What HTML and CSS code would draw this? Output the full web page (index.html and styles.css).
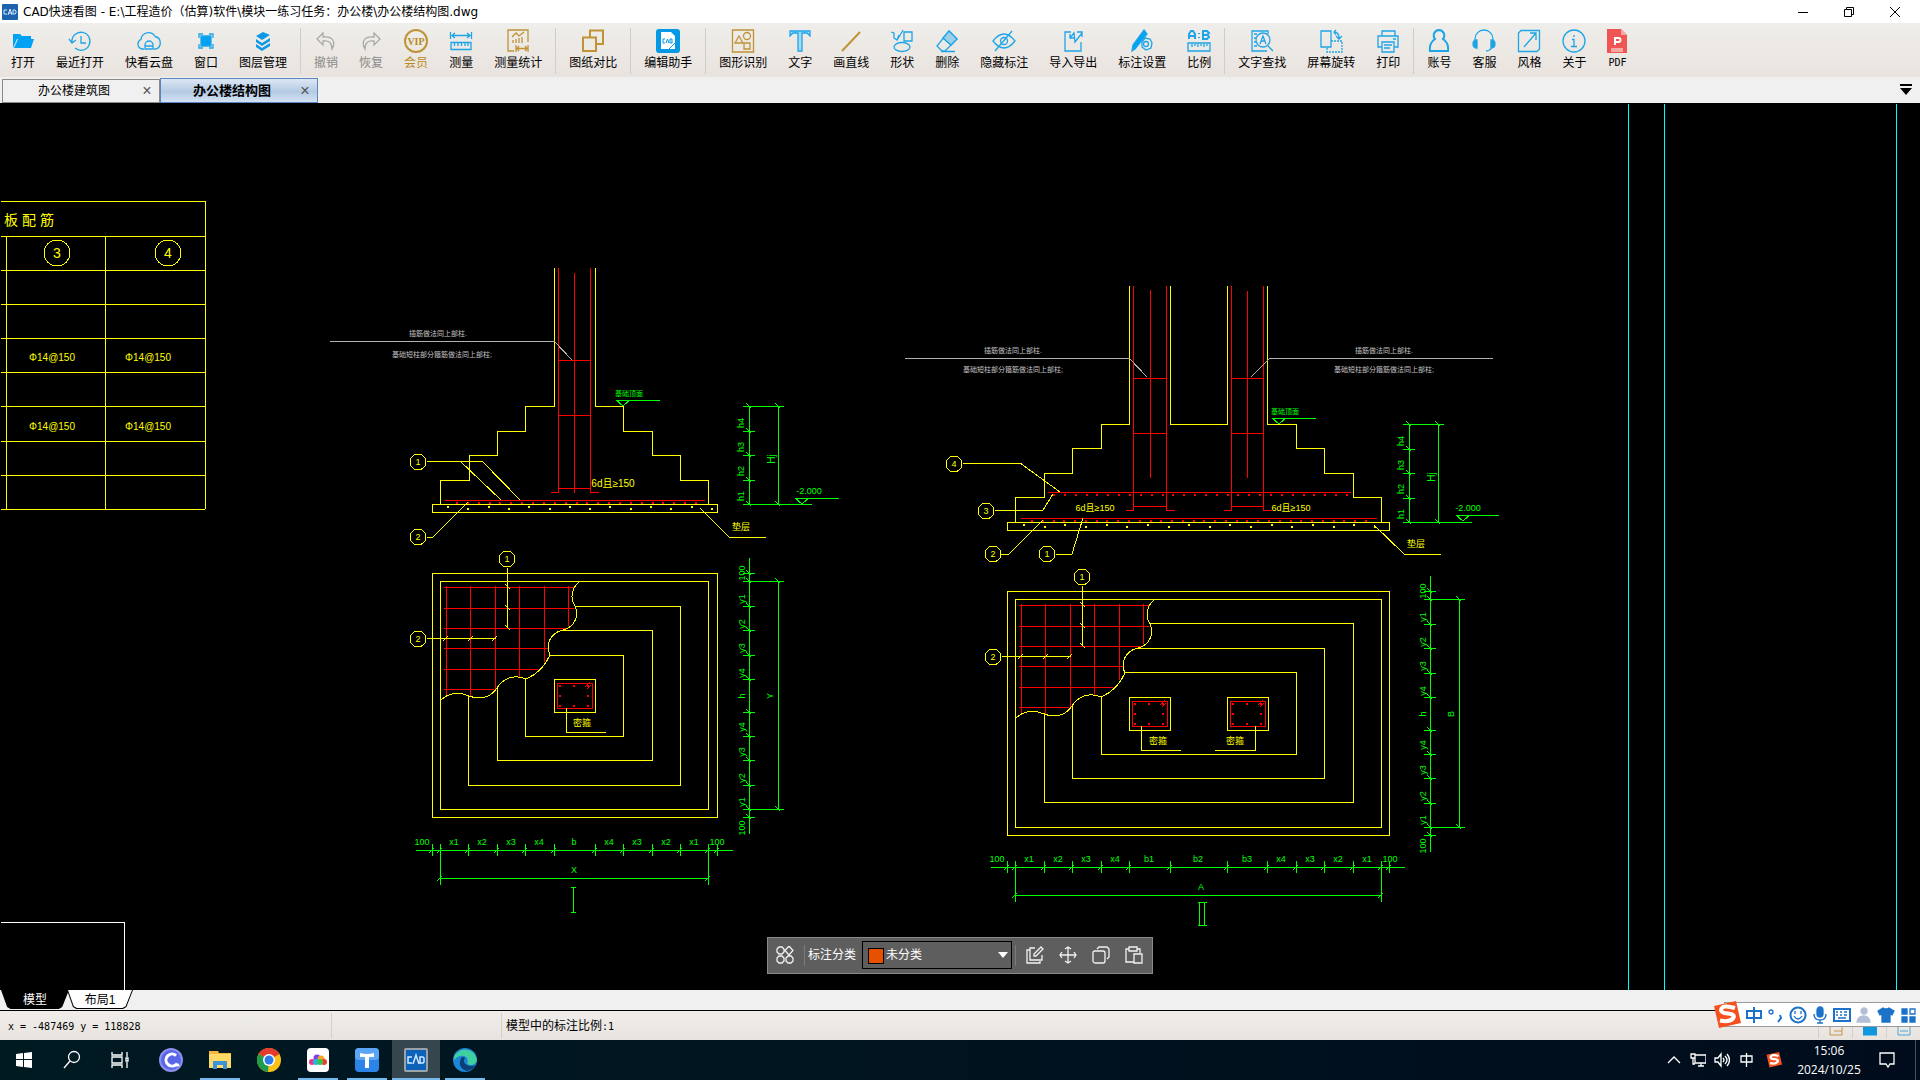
FILE: index.html
```
<!DOCTYPE html>
<html lang="zh-CN">
<head>
  <meta charset="UTF-8" />
  <meta name="viewport" content="width=device-width, initial-scale=1.0" />
  <title>CAD快速看图</title>
  <link rel="stylesheet" href="styles.css">
</head>
<body>
  <header class="titlebar">
    <svg class="app-icon" viewBox="0 0 16 16"><rect width="16" height="16" rx="1" fill="#1b63ad"/><path d="M5 6H2v4h3M6 11l2-6 2 6M6.500 9h3M11 6v4h2l1-1V7l-1-1z" fill="none" stroke="#d6ecff"/></svg>
    <h1>CAD快速看图 - E:\工程造价（估算)软件\模块一练习任务：办公楼\办公楼结构图.dwg</h1>
    <div class="win-buttons">
      <button aria-label="最小化"><svg viewBox="0 0 12 12"><path d="M1 6.500h10"/></svg></button>
      <button aria-label="还原"><svg viewBox="0 0 12 12"><path d="M1.500 3.500h7v7h-7zM3.500 3.500v-2h7v7h-2"/></svg></button>
      <button aria-label="关闭"><svg viewBox="0 0 12 12"><path d="M1 1l10 10M11 1L1 11"/></svg></button>
    </div>
  </header>

  <nav class="toolbar">
    <button><svg viewBox="0 0 24 24"><path d="M2 19V5h7l2 2h9v3H6z" fill="#00a2f3"/><path d="M3 19L7 10h16l-3 9z" fill="#00a2f3"/></svg>打开</button>
    <button><svg viewBox="0 0 24 24" class="ic"><path d="M4 13a9 9 0 1 1 3 6M1 10l3 4 4-3M13 7v7h5"/></svg>最近打开</button>
    <button><svg viewBox="0 0 24 24" class="ic"><path d="M7 20H5A5 5 0 0 1 4 10.500 7.500 7.500 0 0 1 18 7.500 6.500 6.500 0 0 1 19 20h-2M8 20v-4a4 4 0 0 1 8 0v4zM8 17h8"/></svg>快看云盘</button>
    <button><svg viewBox="0 0 24 24" class="ic"><path d="M5 9V5h4M15 5h4v4M19 15v4h-4M9 19H5v-4"/><path d="M7 7h10v10H7z" fill="#00a2f3"/></svg>窗口</button>
    <button><svg viewBox="0 0 24 24"><path d="M5 7l7-4 7 3-8 5zM5 10l6 4 8-5v3l-8 5-6-4zM5 15l6 4 8-5v3l-8 5-6-4z" fill="#0c98e6"/></svg>图层管理</button>
    <span class="sep"></span>
    <button class="off"><svg viewBox="0 0 24 24" class="ic gray"><path d="M9 4L3 10l6 6v-4c6-1 9 2 9 8 4-7 1-13-9-12z"/></svg>撤销</button>
    <button class="off"><svg viewBox="0 0 24 24" class="ic gray"><path d="M15 4l6 6-6 6v-4c-6-1-9 2-9 8-4-7-1-13 9-12z"/></svg>恢复</button>
    <button class="vip"><svg viewBox="0 0 24 24" class="ic gold"><circle cx="12" cy="12" r="11" stroke-width="2"/><text x="12" y="16" class="vip-text">VIP</text></svg>会员</button>
    <button><svg viewBox="0 0 24 24" class="ic"><path d="M1.500 3v7M22.500 3v7M3 6.500h18M6 4L3 6.500 6 9M18 4l3 2.500L18 9M2 13.500h20v7H2zM5.500 14v3M9 14v3M12.500 14v3M16 14v3M19 14v3"/></svg>测量</button>
    <button><svg viewBox="0 0 24 24" class="ic gold"><path d="M8 22H2V1h20v12M6 8l4-4 3 3 5-4M7 14v-3M10 14v-4M13 14v-5M16 14v-6M10 16v7M22 16v7M11 19.500h10M13 17l-2 2.500 2 2.500M19 17l2 2.500-2 2.500"/></svg>测量统计</button>
    <span class="sep"></span>
    <button><svg viewBox="0 0 24 24" class="ic gold"><path d="M9 9V1.500h13V15h-7M2 8.500h13V22H2z" stroke-width="2"/></svg>图纸对比</button>
    <span class="sep"></span>
    <button><svg viewBox="0 0 24 24"><rect width="24" height="24" rx="3" fill="#0598e4"/><path d="M5 3h10l4 4v13H5z" fill="#fff"/><path d="M9 10H7v4h2M10 14l1.500-4 1.500 4M14 10v4h2v-4zM13 20l8-8" fill="none" stroke="#0598e4"/></svg>编辑助手</button>
    <span class="sep"></span>
    <button><svg viewBox="0 0 24 24" class="ic gold"><path d="M1.500 1h21v22h-21zM8 7l4 7H4z"/><circle cx="16" cy="7" r="3.500"/><path d="M13 14h6v6h-6z"/></svg>图形识别</button>
    <button><svg viewBox="0 0 24 24" class="ic"><path d="M2 2h20v5l-3-3h-5v18h-4V4H5L2 7z" fill="#a5daf5"/></svg>文字</button>
    <button><svg viewBox="0 0 24 24" class="ic gold"><path d="M3 22L21 3" stroke-width="2"/></svg>画直线</button>
    <button><svg viewBox="0 0 24 24" class="ic"><path d="M1 3l3 1v5l3 2 5-8 1-2M7 11l2-5M14 3h8v9h-8z"/><ellipse cx="12" cy="18" rx="8" ry="4.500"/></svg>形状</button>
    <button><svg viewBox="0 0 24 24" class="ic"><path d="M14 2l8 8-12 12H7l-5-5zM8 9l8 7M6 22.500h14"/><path d="M14 2l8 8-6 6-8-7z" fill="#9dcfe9"/></svg>删除</button>
    <button><svg viewBox="0 0 24 24" class="ic"><path d="M1 12q11-14 22 0-11 14-22 0zM3 22L20 2"/><circle cx="12" cy="12" r="3.500"/></svg>隐藏标注</button>
    <button><svg viewBox="0 0 24 24" class="ic"><path d="M10 3H4v19h16V13M9 9l4-5 1 9 7-9M16 3h5v5M9 5v4h4"/></svg>导入导出</button>
    <button><svg viewBox="0 0 24 24" class="ic"><path d="M14 1l3 4L5 20l-3 2 1-6z" fill="#00a2f3"/><path d="M15 9l5 1 2 4-1 5-5 2-4-3v-5z" fill="#ece9e6"/><circle cx="16" cy="15" r="2.500"/></svg>标注设置</button>
    <button><svg viewBox="0 0 24 24" class="ic"><path d="M2 10V5l2-3h2l2 3v5M2 7h6M12 4v1M12 8v1M16 2h4l2 2-2 2h-4zM16 6h5l1 2-2 2h-4zM16 2v8" stroke-width="2"/><path d="M1 14h22v8H1zM5 15v3M8 15v2M11 15v3M14 15v2M17 15v3M20 15v2"/></svg>比例</button>
    <span class="sep"></span>
    <button><svg viewBox="0 0 24 24" class="ic"><path d="M17 22H2V2h16v3M4 5h3M4 9h2M4 13h2M4 17h3M18 17l5 5"/><circle cx="13" cy="11" r="7"/><path d="M10 15l3-8 3 8M11 12h4"/></svg>文字查找</button>
    <button><svg viewBox="0 0 24 24" class="ic"><path d="M2 2h10v16H2zM15 3q5 0 5 6M17 7l3 3 3-3M17 1l-2 2 2 3"/><path d="M12 12h11v11H8v-4" stroke-dasharray="2 1"/></svg>屏幕旋转</button>
    <button><svg viewBox="0 0 24 24" class="ic"><path d="M6 7V2h13v5M6 18H2V7h20v11h-4M6 13h12v10H6zM8 16h8M8 19h6M17 10h3"/></svg>打印</button>
    <span class="sep"></span>
    <button><svg viewBox="0 0 24 24" class="ic"><path d="M12 1a5.500 5.500 0 0 1 4 9q6 4 5 12H3q-1-8 5-12a5.500 5.500 0 0 1 4-9z" stroke-width="2"/></svg>账号</button>
    <button><svg viewBox="0 0 24 24" class="ic"><path d="M3 13V10a9 9 0 0 1 18 0v3M20 18q-2 4-6 4"/><path d="M5 11v8q-4 0-4-4t4-4zM19 11v8q4 0 4-4t-4-4z" fill="#2a9fdc"/></svg>客服</button>
    <button><svg viewBox="0 0 24 24" class="ic"><path d="M1.500 4L4 1.500h18.500V20L20 22.500H1.500zM7 18L19 4M13 4h6v7"/></svg>风格</button>
    <button><svg viewBox="0 0 24 24" class="ic"><circle cx="12" cy="12" r="11"/><path d="M12 6v2M10 10.500h2V17M9 17.500h6"/></svg>关于</button>
    <button class="narrow"><svg viewBox="0 0 24 24"><path d="M2 0h14l6 6v18H2z" fill="#ee5553"/><path d="M16 0l6 6h-6zM6 19h12v4H6z" fill="#f7a9a5"/><path d="M10 16V9h3.500a2 2 0 0 1 0 4H10" fill="none" stroke="#fff" stroke-width="2"/></svg><span class="latin">PDF</span></button>
  </nav>

  <div class="doc-tabs">
    <div class="doc-tab"><span>办公楼建筑图</span><button aria-label="关闭">×</button></div>
    <div class="doc-tab active"><span>办公楼结构图</span><button aria-label="关闭">×</button></div>
    <button class="tab-menu" aria-label="标签列表"><svg viewBox="0 0 12 12"><path d="M0 0h12v2H0zM0 4h12l-6 7z"/></svg></button>
  </div>

  <main class="canvas">
    <svg id="drawing" class="drawing" viewBox="0 103 1920 887" preserveAspectRatio="xMinYMin meet"></svg>

    <div class="float-bar">
      <button aria-label="分类"><svg viewBox="0 0 18 18"><path d="M3 1h3l2 2v3L6 8H3L1 6V3zM13 0l4 4.500L13 9 9 4.500zM3 10h3l2 2v3l-2 2H3l-2-2v-3zM12 10h3l2 2v3l-2 2h-3l-2-2v-3z"/></svg></button>
      <span class="bar-sep"></span>
      <label for="category">标注分类</label>
      <div class="select-wrap">
        <select id="category"><option>未分类</option></select>
      </div>
      <span class="bar-sep"></span>
      <button aria-label="编辑"><svg viewBox="0 0 18 18"><path d="M9 2H4v12h12V9M4 4H1v13h13v-2M8 10V8l7-7 2 2-7 7z"/></svg></button>
      <button aria-label="移动"><svg viewBox="0 0 18 18"><path d="M9 1v16M1 9h16M6 3l3-2 3 2M6 15l3 2 3-2M3 6L1 9l2 3M15 6l2 3-2 3"/></svg></button>
      <button aria-label="复制"><svg viewBox="0 0 18 18"><rect x="1" y="5" width="12" height="12" rx="2"/><path d="M5 3l2-2h8l2 2v8l-2 2"/></svg></button>
      <button aria-label="粘贴"><svg viewBox="0 0 18 18"><path d="M9 16H1V3h3M12 3h3v4M4 1h8v4H4zM9 8h8v9H9z"/></svg></button>
    </div>
  </main>

  <div class="layout-tabs">
    <button class="layout-tab active">模型</button>
    <button class="layout-tab">布局1</button>
  </div>

  <footer class="status">
    <span class="coords latin">x = -487469 y = 118828</span>
    <span class="blank"></span>
    <span class="scale">模型中的标注比例<span class="latin">:1</span></span>
    <div class="status-icons">
      <i><svg viewBox="0 0 14 14"><path d="M1 1h12v12H1zM5 9h8" stroke="#c29a4b"/></svg></i>
      <i><svg viewBox="0 0 14 14"><path d="M0 0h14v13H0z" fill="#0e97dc" stroke="#0e97dc"/></svg></i>
      <i><svg viewBox="0 0 14 14"><path d="M1 1h12v12H1zM3 9h8" stroke="#4aa7d4"/></svg></i>
    </div>
  </footer>

  <div class="ime">
    <svg class="sogou" viewBox="0 0 28 28"><path d="M1 5L23 0l5 22-22 5z" fill="#f4511e"/><path d="M22 7q-13-4-14 2 0 3 7 3.500 8 1 5 5-4 4-13 2" fill="none" stroke="#fff" stroke-width="4"/></svg>
    <svg viewBox="0 0 18 18"><path d="M2 5h14v7H2zM9 1v16" class="thick"/></svg>
    <svg viewBox="0 0 18 18"><circle cx="4" cy="6" r="2"/><path d="M13 9l1 3-3 4" class="thick"/></svg>
    <svg viewBox="0 0 18 18"><circle cx="9" cy="9" r="7.500" class="thick"/><path d="M5 10q4 6 8 0M6 5v3M12 5v3"/></svg>
    <svg viewBox="0 0 18 18"><rect x="6" y="1" width="6" height="10" rx="3" class="fill"/><path d="M3 8q0 6 6 6t6-6M9 14v3M6 17h6"/></svg>
    <svg viewBox="0 0 18 18"><path d="M1 3h16v12H1z" class="thick"/><path d="M3 6h2M7 6h2M11 6h3M3 9h2M7 9h2M11 9h3M5 12h8"/></svg>
    <svg viewBox="0 0 18 18" class="pale"><circle cx="9" cy="5" r="3" class="fill"/><path d="M2 16q1-6 7-6 5 0 6 6z" class="fill"/></svg>
    <svg viewBox="0 0 18 18"><path d="M1 5l5-3q3 2 6 0l5 3-2 4-2-1v8H5V8L3 9z" class="fill"/></svg>
    <svg viewBox="0 0 18 18"><path d="M3 3h5v5H3zM3 11h5v5H3zM11 11h5v5h-5z" class="fill"/><path d="M11 3h5v5h-5z"/></svg>
  </div>

  <div class="taskbar">
    <button aria-label="开始"><svg viewBox="0 0 24 24"><path d="M4 6l7-1v6H4zM12 5l8-1v7h-8zM4 12h7v7l-7-1zM12 12h8v8l-8-1z" fill="#fff"/></svg></button>
    <button aria-label="搜索"><svg viewBox="0 0 24 24" class="line"><circle cx="14" cy="9" r="5.500"/><path d="M10 13l-6 7"/></svg></button>
    <button aria-label="任务视图" class="last-system"><svg viewBox="0 0 24 24" class="line"><path d="M4 4v3h10V4M4 20v-3h10v3M4 9h10v6H4zM19 4v5M19 14v6M18 10h2v3h-2z"/></svg></button>
    <button aria-label="浏览器"><svg viewBox="0 0 24 24"><circle cx="12" cy="12" r="12" fill="#8d90ec"/><circle cx="12" cy="12" r="10" fill="#5a66ea"/><path d="M17 7.500a6 6 0 1 0 0 9q1 1 3 0" fill="none" stroke="#fff" stroke-width="3"/></svg></button>
    <button aria-label="文件资源管理器" class="running"><svg viewBox="0 0 24 24"><path d="M1 3h9l1 2h12v15H1z" fill="#f4b63f"/><path d="M1 6h22v14H1z" fill="#ffd968"/><path d="M5 21v-8h14v8h-4v-4H9v4z" fill="#3c93d8"/></svg></button>
    <button aria-label="Chrome"><svg viewBox="0 0 24 24"><circle cx="12" cy="12" r="12" fill="#fbc116"/><path d="M12 12L1.600 6a12 12 0 0 1 20.800 0z" fill="#e33b2e"/><path d="M12 12l-1 12A12 12 0 0 1 1.600 6z" fill="#1e9c4b"/><circle cx="12" cy="12" r="6" fill="#fff"/><circle cx="12" cy="12" r="4.500" fill="#2c7be8"/></svg></button>
    <button aria-label="网盘" class="running"><svg viewBox="0 0 24 24"><rect x="1" width="22" height="24" rx="4" fill="#fff"/><circle cx="6" cy="14" r="3" fill="#f0358b"/><circle cx="11" cy="10" r="3.500" fill="#7a3ff0"/><circle cx="15" cy="11" r="3.500" fill="#f6a81c"/><circle cx="18" cy="14" r="3" fill="#f03c2e"/><circle cx="10" cy="14" r="3" fill="#23b8e8"/><circle cx="14" cy="14" r="3" fill="#36c552"/></svg></button>
    <button aria-label="天正" class="running"><svg viewBox="0 0 24 24"><rect width="24" height="24" rx="4" fill="#2d84e8"/><rect width="24" height="12" rx="4" fill="#5aa6f4"/><path d="M5 5q7 2 14 0v4h-5v11h-4V9H5z" fill="#fff"/></svg></button>
    <button aria-label="CAD快速看图" class="running current"><svg viewBox="0 0 24 24"><rect width="24" height="24" rx="2" fill="#9aa3aa"/><rect x="2" y="2" width="20" height="20" fill="#0b62b8"/><path d="M8 9H4v6h4M9 16l3-9 3 9M16 9v6h3l1-1v-4l-1-1z" fill="none" stroke="#cfe8ff" stroke-width="1.500"/></svg></button>
    <button aria-label="Edge" class="running"><svg viewBox="0 0 24 24"><circle cx="12" cy="12" r="12" fill="#1c87d8"/><path d="M1 9A12 12 0 0 1 24 12q-1 5-7 5-4-1-2-4Q14 7 7 8q-4 1-6 4z" fill="#3fcfa0"/><path d="M8 10q-4 10 6 13 6-1 9-6-5 2-9 0-5-3-2-7-2-2-4 0z" fill="#0b3f78"/></svg></button>

    <div class="tray">
      <svg viewBox="0 0 16 16" class="line"><path d="M2 11l6-6 6 6"/></svg>
      <svg viewBox="0 0 16 16" class="line"><path d="M5 3h11v8H5zM8 14h6M11 11v3M1 2h4v4H1zM3 6v6h2"/></svg>
      <svg viewBox="0 0 16 16" class="line"><path d="M1 6h3l3-4v12L4 10H1zM9 6q2 2 0 4M11 4q4 4 0 8M13 2q5 6 0 12"/></svg>
      <svg viewBox="0 0 16 16" class="line"><path d="M3 4h11v6H3zM8.500 1v14"/></svg>
      <svg viewBox="0 0 28 28" class="tray-ime"><path d="M1 5L23 0l5 22-22 5z" fill="#f4511e"/><path d="M22 7q-13-4-14 2 0 3 7 3.500 8 1 5 5-4 4-13 2" fill="none" stroke="#fff" stroke-width="4"/></svg>
      <div class="clock"><span>15:06</span><span>2024/10/25</span></div>
      <svg viewBox="0 0 16 16" class="line"><path d="M1 1h14v11h-4l-2 3-2-3H1z"/></svg>
    </div>
  </div>

  <script src="script.js"></script>
</body>
</html>
```
FILE: styles.css
```
* {
  box-sizing: border-box;
}
body {
  margin: 0;
  height: 100vh;
  display: flex;
  flex-direction: column;
  overflow: hidden;
  background: #000;
  color: #000;
  font-family: "Liberation Sans", "Noto Sans CJK SC", sans-serif;
  font-size: 12px;
  line-height: 16px;
}
button {
  border: none;
  background: none;
  padding: 0;
  color: inherit;
  font: inherit;
}
svg {
  display: block;
  flex: none;
}
.latin {
  font-family: "DejaVu Sans Mono", monospace;
  font-size: 10px;
}

/* title bar */
.titlebar {
  display: flex;
  align-items: center;
  height: 23px;
  padding-left: 2px;
  background: #fff;
}
.app-icon {
  width: 16px;
  height: 16px;
}
.titlebar h1 {
  flex: 1;
  margin: 0 0 0 5px;
  font: 12px/16px "DejaVu Sans", "Noto Sans CJK SC", sans-serif;
}
.win-buttons {
  display: flex;
  margin-right: 2px;
}
.win-buttons button {
  width: 46px;
  height: 20px;
  display: flex;
  align-items: center;
  justify-content: center;
}
.win-buttons svg {
  width: 12px;
  height: 12px;
  fill: none;
  stroke: #000;
}

/* toolbar */
.toolbar {
  display: flex;
  gap: 1px;
  height: 54px;
  padding: 5px 0 3px 1px;
  background: linear-gradient(#efeeea, #e9e3df);
}
.toolbar button {
  display: flex;
  flex-direction: column;
  align-items: center;
  gap: 2px;
  padding: 1px 10px 0;
  white-space: nowrap;
}
.toolbar .narrow {
  padding: 1px 8px 0;
}
.toolbar svg {
  width: 24px;
  height: 24px;
}
.toolbar .sep {
  width: 1px;
  margin: 0 2px;
  background: #cfcdca;
}
.toolbar .off {
  color: #8c8a88;
}
.toolbar .vip {
  color: #b98a1e;
}
.ic {
  fill: none;
  stroke: #1ea5e8;
  stroke-width: 1.3;
}
.gold {
  stroke: #bf9336;
}
.gray {
  stroke: #a9a8a6;
}
.vip-text {
  font: bold 10px "Liberation Serif", serif;
  fill: #b98a1e;
  stroke: none;
  text-anchor: middle;
}

/* document tabs */
.doc-tabs {
  display: flex;
  align-items: flex-end;
  height: 26px;
  padding-left: 2px;
  background: #f0f0f0;
}
.doc-tab {
  display: flex;
  align-items: center;
  justify-content: flex-end;
  width: 158px;
  height: 24px;
  padding-right: 6px;
  border: 1px solid #8a8a8a;
}
.doc-tab span {
  flex: 1;
  padding: 0 8px 0 12px;
  text-align: center;
}
.doc-tab span + button {
  width: 12px;
  font-size: 16px;
  color: #555;
}
.doc-tab.active {
  height: 25px;
  border-color: #5c85bd;
  background: linear-gradient(#dce7f4, #b4cae4 55%, #d5e3f3);
  font-size: 13px;
  font-weight: bold;
}
.doc-tab.active button {
  font-weight: normal;
}
.tab-menu {
  margin: 0 8px 7px auto;
}
.tab-menu svg {
  width: 12px;
  height: 12px;
}

/* drawing area */
.canvas {
  position: relative;
  flex: 1;
  min-height: 0;
  background: #000;
}
.drawing {
  width: 100%;
  height: 100%;
  font-family: "Liberation Sans", "Noto Sans CJK SC", sans-serif;
}
.drawing path,
.drawing circle {
  fill: none;
  shape-rendering: crispEdges;
}
.drawing text {
  text-anchor: middle;
  dominant-baseline: central;
}
.yellow { stroke: #ff0; }
.red { stroke: #f00; }
.green { stroke: #0f0; }
.gray-line { stroke: #b0b0b0; }
.cyan { stroke: #0ff; }
.white { stroke: #fff; }
.t-yellow { fill: #ff0; }
.t-green { fill: #0f0; }
.t-gray { fill: #c4c4c4; }
.s7 { font-size: 7px; }
.s9 { font-size: 9px; }
.s10 { font-size: 10px; }
.s14 { font-size: 14px; }

/* floating annotation bar */
.float-bar {
  position: absolute;
  left: 50%;
  bottom: 16px;
  transform: translateX(-50%);
  display: flex;
  align-items: center;
  height: 37px;
  padding: 0 9px 1px 8px;
  border: 1px solid #8a8a8a;
  background: #5e5e5e;
  color: #fff;
  white-space: nowrap;
}
.float-bar svg {
  width: 18px;
  height: 18px;
  fill: none;
  stroke: #f2f2f2;
  stroke-width: 1.3;
}
.float-bar > button {
  margin-right: 15px;
}
.float-bar > button:first-child {
  margin-right: 10px;
}
.float-bar > button:last-child {
  margin-right: 0;
}
.bar-sep {
  width: 1px;
  height: 21px;
  margin-right: 3px;
  background: #7c7c7c;
}
.select-wrap {
  position: relative;
  margin: 0 3px 0 6px;
}
.select-wrap + .bar-sep {
  margin-right: 10px;
}
.select-wrap select {
  display: block;
  width: 150px;
  height: 28px;
  padding: 0 24px 0 23px;
  appearance: none;
  border: 1px solid #000;
  border-radius: 0;
  background: #5e5e5e;
  color: #fff;
  font: inherit;
}
.select-wrap::before {
  content: "";
  position: absolute;
  left: 6px;
  top: 7px;
  width: 14px;
  height: 14px;
  border: 1px solid #000;
  background: #e65100;
}
.select-wrap::after {
  content: "";
  position: absolute;
  right: 4px;
  top: 11px;
  border: 5px solid transparent;
  border-top: 6px solid #fff;
  border-bottom: 0;
}

/* model / layout tabs */
.layout-tabs {
  display: flex;
  height: 21px;
  padding-left: 1px;
  border-bottom: 1px solid #000;
  background: #f0f0f0;
}
.layout-tab {
  display: grid;
  place-items: center;
  position: relative;
  z-index: 0;
  width: 66px;
  height: 19px;
  margin-left: -2px;
  background: #000;
  clip-path: polygon(0 0, 100% 0, 90% 90%, 85% 100%, 14% 100%, 9% 90%);
}
.layout-tab.active {
  width: 68px;
  margin-left: 0;
  color: #fff;
}
.layout-tab:not(.active)::before {
  content: "";
  position: absolute;
  inset: 0 1px 1px;
  z-index: -1;
  background: #fff;
  clip-path: polygon(0 0, 100% 0, 90% 90%, 85% 100%, 14% 100%, 9% 90%);
}

/* status bar */
.status {
  display: flex;
  align-items: center;
  height: 29px;
  background: linear-gradient(#efedea, #e9e3df);
}
.status > span {
  height: 25px;
  line-height: 27px;
  border-right: 1px solid #d2cfcc;
}
.coords {
  width: 332px;
  padding-left: 8px;
}
.blank {
  width: 170px;
}
.status > .scale {
  flex: 1;
  padding-left: 4px;
  border: none;
}
.status-icons {
  display: flex;
}
.status-icons i {
  display: flex;
  align-items: center;
  justify-content: center;
  width: 34px;
  height: 25px;
  border-left: 1px solid #d2cfcc;
}
.status-icons svg {
  width: 14px;
  height: 14px;
  margin-top: 6px;
  fill: none;
}

/* input method bar lies over the status bar */
.ime {
  position: absolute;
  right: 0;
  bottom: 53px;
  display: flex;
  align-items: center;
  gap: 4px;
  height: 25px;
  padding: 0 3px 0 2px;
  border: 1px solid #9a9a9a;
  border-right: none;
  background: #fff;
}
.ime svg {
  width: 18px;
  height: 18px;
  fill: none;
  stroke: #1b72c8;
  stroke-width: 1.3;
}
.ime .sogou {
  width: 28px;
  height: 28px;
  margin-left: -14px;
  stroke: none;
}
.ime .thick {
  stroke-width: 2;
}
.ime .fill {
  fill: #1b72c8;
}
.ime .pale {
  stroke: #b4bfd6;
}
.ime .pale .fill {
  fill: #b4bfd6;
}

/* taskbar */
.taskbar {
  display: flex;
  height: 40px;
  background: linear-gradient(90deg, #001a22, #000c1c);
  color: #fff;
}
.taskbar button {
  display: flex;
  align-items: center;
  justify-content: center;
  width: 48px;
  margin-right: 1px;
}
.taskbar button:nth-child(-n+3) {
  margin-right: 0;
}
.taskbar .last-system {
  width: 51px;
  padding-right: 3px;
}
.taskbar button svg {
  width: 24px;
  height: 24px;
}
.taskbar .running {
  background: linear-gradient(#76b9ed, #76b9ed) center bottom / 40px 2px no-repeat;
}
.taskbar .current {
  background-size: 48px 2px;
  background-color: #36464e;
}
.line {
  fill: none;
  stroke: #fff;
  stroke-width: 1.3;
}
.tray {
  display: flex;
  align-items: center;
  gap: 8px;
  margin-left: auto;
  margin-right: 4px;
  padding-right: 20px;
  border-right: 1px solid #4a525e;
}
.tray svg {
  width: 16px;
  height: 16px;
}
.tray .tray-ime {
  margin-left: 4px;
}
.clock {
  display: flex;
  flex-direction: column;
  width: 78px;
  margin-right: 3px;
  text-align: center;
  font: 12px/19px "Open Sans", sans-serif;
}
```
FILE: script.js
```
const svg = document.getElementById("drawing");

function add(tag, attrs, text) {
  const el = document.createElementNS("http://www.w3.org/2000/svg", tag);
  for (const key in attrs) el.setAttribute(key, attrs[key]);
  if (text) el.textContent = text;
  svg.appendChild(el);
}

function path(color, d) {
  add("path", { class: color, d: d });
}

function label(color, size, x, y, text, vertical) {
  const attrs = { class: "t-" + color + " s" + size, x: x, y: y };
  if (vertical) attrs.transform = `rotate(-90 ${x} ${y})`;
  add("text", attrs, text);
}

function mark(x, y, r, text) {
  add("circle", { class: "yellow", cx: x, cy: y, r: r });
  label("yellow", r > 10 ? 14 : 9, x, y, text);
}

// rebar table on the left
function table() {
  path("yellow", "M1 201H205V509M6 236V509M105 236V509");
  [236, 270, 304, 338, 372, 406, 441, 475, 509].forEach(y => path("yellow", `M1 ${y}H205`));
  ["板", "配", "筋"].forEach((t, i) => label("yellow", 14, 11 + i * 18, 220, t));
  mark(57, 253, 13, "3");
  mark(168, 253, 13, "4");
  [357, 426].forEach(y => {
    label("yellow", 10, 52, y, "Φ14@150");
    label("yellow", 10, 148, y, "Φ14@150");
  });
}

// column reinforcement: outline edges, bars, stirrups
function column(x1, x2, top, barTop, barEnd) {
  path("red", `M${x1 + 4} ${top}V${top + 224}H${x1 - 3}M${x2 - 5} ${top}V${top + 224}H${x2 + 4}`);
  const mid = Math.floor((x1 + x2) / 2);
  path("red", `M${mid} ${barTop}V${barEnd}`);
  [92, 147, 220].forEach(d => path("red", `M${x1 + 4} ${top + d}H${x2 - 5}`));
}

function dots(color, x1, x2, y, count, size) {
  for (let i = 0; i < count; i++) {
    const x = Math.round(x1 + (x2 - x1) * i / (count - 1));
    const shift = color === "yellow" && i % 2 ? 2 : 0;
    path(color, `M${x} ${y + shift}h${size}m-2 1h${size}`);
  }
}

function level(x, y, end) {
  path("green", `M${x} ${y}H${end}M${x} ${y}l7 6l7 -6`);
}

// vertical dimension chains
function heights(x, y) {
  path("green", `M${x} ${y}v98M${x + 29} ${y}v98M${x - 6} ${y}h41M${x - 6} ${y + 98}h69`);
  [0, 25, 49, 74, 98].forEach(d => path("green", `M${x - 6} ${y + d}h12M${x - 3} ${y + d - 3}l5 5`));
  [0, 98].forEach(d => path("green", `M${x + 26} ${y + d - 3}l5 5`));
  [["h4", 17], ["h3", 41], ["h2", 65], ["h1", 90]].forEach(([t, d]) => label("green", 9, x - 8, y + d, t, true));
  label("green", 10, x + 22, y + 53, "Hj", true);
}

function planHeights(x, y, total) {
  path("green", `M${x} ${y - 15}v276M${x + 29} ${y + 8}v228M${x} ${y + 8}h35M${x} ${y + 236}h35`);
  [0, 8, 33, 57, 82, 106, 139, 163, 187, 212, 236, 244].forEach(d =>
    path("green", `M${x - 6} ${y + d}h12M${x - 3} ${y + d - 3}l5 5`));
  [8, 236].forEach(d => path("green", `M${x + 26} ${y + d - 3}l5 5`));
  [["100", 0], ["y1", 26], ["y2", 51], ["y3", 75], ["y4", 100], ["h", 123],
   ["y4", 154], ["y3", 179], ["y2", 205], ["y1", 229], ["100", 255]].forEach(([t, d]) =>
    label("green", 9, x - 7, y + d, t, true));
  label("green", 9, x + 21, y + 123, total, true);
}

function widths(y, ticks, names, total) {
  const last = ticks.length - 1;
  path("green", `M${ticks[0] - 16} ${y}H${ticks[last] + 16}`);
  ticks.forEach(x => path("green", `M${x} ${y - 6}v12M${x - 3} ${y + 3}l5 -5`));
  path("green", `M${ticks[1]} ${y}v35M${ticks[last - 1]} ${y}v35M${ticks[1]} ${y + 28}H${ticks[last - 1]}`);
  [1, last - 1].forEach(i => path("green", `M${ticks[i] - 3} ${y + 31}l5 -5`));
  names.forEach((t, i) => {
    let x = Math.floor((ticks[i] + ticks[i + 1]) / 2);
    if (i === 0) x -= 14;
    if (i === names.length - 1) x += 5;
    label("green", 9, x, y - 8, t);
  });
  label("green", 9, total[0], y + 20, total[1]);
}

// broken-out corner of the plan with the mesh below it
function mesh(dx, dy) {
  const p = (x, y) => `${x + dx} ${y + dy}`;
  [[446, 696], [470, 696], [495, 690], [519, 677], [544, 662], [568, 626]].forEach(([x, end]) =>
    path("red", `M${p(x, 586)}V${end + dy}`));
  [[587, 574], [608, 574], [628, 566], [648, 549], [669, 538], [689, 494]].forEach(([y, end]) =>
    path("red", `M${p(444, y)}H${end + dx}`));
  path("yellow", `M${p(579, 582)}C${p(573, 587)} ${p(569, 597)} ${p(575, 606)}` +
    `C${p(579, 616)} ${p(575, 627)} ${p(563, 630)}C${p(550, 633)} ${p(545, 645)} ${p(550, 655)}` +
    `C${p(546, 664)} ${p(538, 674)} ${p(526, 679)}C${p(515, 674)} ${p(503, 678)} ${p(497, 688)}` +
    `C${p(490, 698)} ${p(480, 700)} ${p(469, 696)}C${p(460, 692)} ${p(449, 692)} ${p(441, 700)}`);
  mark(507 + dx, 559 + dy, 8, "1");
  path("yellow", `M${p(507, 568)}v60`);
  [587, 608, 628].forEach(y => path("yellow", `M${p(505, y - 3)}l5 5`));
  mark(418 + dx, 639 + dy, 8, "2");
  path("yellow", `M${p(427, 638)}h69`);
  [446, 471, 495].forEach(x => path("yellow", `M${p(x - 3, 641)}l5 -5`));
}

function stub(x, y, leader, dir) {
  path("yellow", `M${x} ${y}h41v33h-41z`);
  path("red", `M${x + 3} ${y + 4}h35v25h-35zM${x + 31} ${y + 8}l5 -5M${x + 33} ${y + 10}l4 -4`);
  [6, 20, 34].forEach(dx => [6, 16, 26].forEach(dy => {
    if (dx !== 20 || dy !== 16) path("red", `M${x + dx - 1} ${y + dy}h2m-2 1h2`);
  }));
  path("yellow", `M${leader} ${y + 29}v24h${40 * dir}`);
}

function footingOne() {
  path("yellow", "M554 268V406H525V431H497V455H469V480H440V504");
  path("yellow", "M595 268V406H623V431H652V455H680V480H708V504");
  path("yellow", "M432 504H717V512H432z");
  column(554, 595, 268, 273, 493);
  path("red", "M445 500H705");
  dots("red", 456, 695, 502, 23, 2);
  dots("yellow", 447, 711, 506, 14, 2);
  path("gray-line", "M330 341H554L572 360");
  label("gray", 7, 438, 333, "插筋做法同上部柱.");
  label("gray", 7, 442, 354, "基础短柱部分箍筋做法同上部柱;");
  label("green", 7, 629, 393, "基础顶面");
  level(616, 400, 660);
  heights(749, 406);
  label("green", 9, 809, 491, "-2.000");
  level(795, 498, 839);
  label("yellow", 10, 613, 483, "6d且≥150");
  mark(418, 462, 8, "1");
  path("yellow", "M427 461H482L520 500M460 461L501 500");
  mark(418, 537, 8, "2");
  path("yellow", "M427 537H433L468 502");
  label("yellow", 9, 741, 527, "垫层");
  path("yellow", "M700 508L729 537H766");

  path("yellow", "M432 573H717V817H432zM440 581H708V809H440z");
  path("yellow", "M575 606H680V785H468V696M563 630H652V760H497V688M550 655H623V736H525V679");
  mesh(0, 0);
  stub(554, 679, 566, 1);
  label("yellow", 9, 582, 723, "密箍");
  planHeights(749, 573, "Y");
  widths(850, [432, 440, 468, 497, 525, 554, 595, 623, 652, 680, 708, 717],
    ["100", "x1", "x2", "x3", "x4", "b", "x4", "x3", "x2", "x1", "100"], [574, "X"]);
  path("green", "M573 887V912M571 887h5M571 912h5");
}

function footingTwo() {
  path("yellow", "M1129 286V424H1101V448H1072V473H1044V497H1015V522");
  path("yellow", "M1267 286V424H1296V448H1324V473H1353V497H1381V522");
  path("yellow", "M1170 286V424H1227V286");
  path("yellow", "M1007 522H1389V530H1007z");
  column(1129, 1171, 286, 290, 478);
  column(1227, 1268, 286, 291, 478);
  path("red", "M1048 492H1351M1021 518H1377");
  dots("red", 1053, 1346, 494, 28, 2);
  dots("red", 1031, 1365, 520, 32, 2);
  dots("yellow", 1023, 1374, 524, 18, 2);
  path("gray-line", "M905 358H1129L1147 377M1493 358H1270L1251 377");
  label("gray", 7, 1013, 350, "插筋做法同上部柱.");
  label("gray", 7, 1013, 369, "基础短柱部分箍筋做法同上部柱;");
  label("gray", 7, 1384, 350, "插筋做法同上部柱.");
  label("gray", 7, 1384, 369, "基础短柱部分箍筋做法同上部柱;");
  label("green", 7, 1285, 411, "基础顶面");
  level(1272, 418, 1316);
  heights(1409, 424);
  label("green", 9, 1468, 508, "-2.000");
  level(1456, 515, 1499);
  label("yellow", 9, 1095, 508, "6d且≥150");
  label("yellow", 9, 1291, 508, "6d且≥150");
  mark(954, 464, 8, "4");
  path("yellow", "M963 463H1020L1060 492");
  mark(986, 511, 8, "3");
  path("yellow", "M995 510H1043L1053 494");
  mark(993, 554, 8, "2");
  path("yellow", "M1001 554H1009L1043 520");
  mark(1047, 554, 8, "1");
  path("yellow", "M1056 554H1072L1083 518");
  label("yellow", 9, 1416, 544, "垫层");
  path("yellow", "M1374 525L1404 554H1441");

  path("yellow", "M1007 591H1389V835H1007zM1015 599H1381V827H1015z");
  path("yellow", "M1150 623H1353V802H1044V713M1137 648H1324V778H1072V705M1125 672H1296V754H1101V696");
  mesh(575, 18);
  stub(1129, 697, 1141, 1);
  stub(1227, 697, 1255, -1);
  label("yellow", 9, 1158, 741, "密箍");
  label("yellow", 9, 1235, 741, "密箍");
  planHeights(1430, 591, "B");
  widths(867, [1007, 1015, 1044, 1072, 1101, 1129, 1170, 1227, 1267, 1296, 1324, 1353, 1381, 1389],
    ["100", "x1", "x2", "x3", "x4", "b1", "b2", "b3", "x4", "x3", "x2", "x1", "100"], [1201, "A"]);
  path("green", "M1199 902V925M1204 902V925M1198 902h9M1198 925h9");
}

table();
footingOne();
footingTwo();
path("cyan", "M1628 104V990M1664 104V990M1896 104V990");
path("white", "M1 922H124V990");
```
